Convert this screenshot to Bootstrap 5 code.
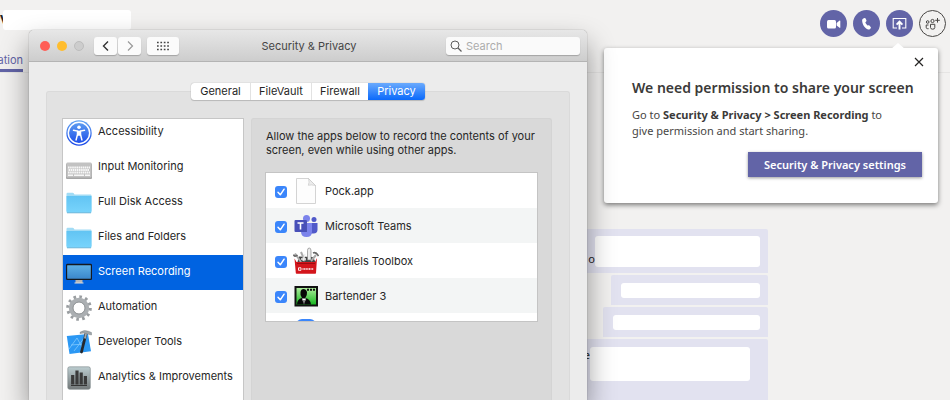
<!DOCTYPE html>
<html lang="en">
<head>
<meta charset="utf-8">
<meta name="viewport" content="width=device-width, initial-scale=1">
<title>Security &amp; Privacy</title>
<link rel="stylesheet" href="https://cdn.jsdelivr.net/npm/bootstrap@5.3.0/dist/css/bootstrap.min.css">
<style>
  body { background: #f2f1f0; font-family: "Noto Sans", "Open Sans", sans-serif; font-size: 11px; line-height: 16px; color: #252423; }
  .app-head { height: 73px; border-bottom: 1px solid #e6e5e4; padding: 10px 4px 0 0; }
  .calls { gap: 6px; }
  .blank { background: #fff; border-radius: 3px; }
  .who { width: 131px; height: 20px; margin-bottom: 21px; font-size: 16px; }
  .who .blank { width: 128px; height: 20px; }
  .who-name { width: 3px; overflow: hidden; font-weight: 600; }
  .app-tab { width: 23px; height: 21px; border-bottom: 3px solid #6264a7; color: #6264a7; text-decoration: none; font-size: 11px; font-family: Inter, sans-serif; overflow: hidden; line-height: 18px; }
  .round { width: 27px; height: 27px; border-radius: 50%; background: #6264a7; border: 0; padding: 0; color: #fff; }
  .round.line { background: transparent; border: 1px solid #484644; color: #484644; }
  .chat { padding: 156px 182px 0 0; gap: 2px; }
  .bubble { background: #e2e2f0; border-radius: 2px 2px 0 0; }
  .bubble.a { padding: 7px 8px 6px; height: 44px; }
  .bubble.b { padding: 8px 8px 7px 10px; height: 30px; }
  .bubble.c { padding: 8px 18px 20px; height: 69px; }
  .w-a { width: 165px; height: 31px; } .w-b { width: 139px; height: 15px; }
  .w-c { width: 147px; height: 15px; } .w-d { width: 160px; height: 34px; }

  .tip { top: 48px; right: 12px; width: 334px; height: 155px; background: #fff; border-radius: 3px; box-shadow: 0 2px 5px rgba(0,0,0,.5); padding: 6px 16px 0 28px; z-index: 1; }
  .tip::before { content: ""; position: absolute; top: -5px; right: 33px; border: 7px solid transparent; border-top: 0; border-bottom: 6px solid #fff; }
  .tip h1 { font-size: 14px; line-height: 20px; font-weight: 600; color: #3b3a39; margin: 8px 0 9px; white-space: nowrap; }
  .tip p { color: #484644; margin: 0 0 13px; }
  .tip b { font-weight: 700; color: #3b3a39; }
  .x-btn { background: none; border: 0; padding: 0; width: 16px; height: 16px; margin-right: -5px; }
  .go-btn { background: #6264a7; color: #fff; border: 0; width: 174px; height: 25px; font-weight: 600; box-shadow: 0 1px 3px rgba(0,0,0,.4); padding: 0; }

  .win { top: 30px; left: 29px; width: 558px; bottom: 0; border-radius: 5px 5px 0 0; background: #ececec; box-shadow: 0 0 1px rgba(0,0,0,.6), 0 14px 28px rgba(0,0,0,.42); font-family: Inter, sans-serif; font-size: 11px; line-height: 14px; z-index: 2; overflow: hidden; }
  .win-bar { height: 32px; background: linear-gradient(#e7e7e7, #cdcdcd); border-bottom: 1px solid #b4b4b4; padding: 0 7px 0 11px; flex: none; }
  .light { width: 10px; height: 10px; border-radius: 50%; border: 0; padding: 0; margin-right: 7px; }
  .light.red { background: #ff5f57; } .light.amber { background: #ffbd2e; } .light.off { background: #cdcdcd; border: 1px solid #bdbdbd; margin-right: 10px; }
  .pair { gap: 1px; }
  .tool { width: 23px; height: 18px; background: #fbfbfb; border: 0; border-radius: 3px; padding: 0; box-shadow: 0 1px 1px rgba(0,0,0,.22); }
  .tool.wide { width: 32px; margin-left: 6px; }
  .win-name { color: #454545; margin-right: 7px; }
  .find { width: 134px; height: 18px; background: #fafafa; border-radius: 3px; box-shadow: 0 1px 1px rgba(0,0,0,.22); padding-left: 4px; gap: 4px; }
  .find input { border: 0; outline: 0; background: none; padding: 0; width: 100%; font-size: 11px; }
  .find input::placeholder { color: #acacac; opacity: 1; }
  .win-body { padding: 21px 17px 0; min-height: 0; }
  .tabs { margin-bottom: -9px; z-index: 1; height: 17px; background: #fff; border-radius: 3px; box-shadow: 0 0 1px rgba(0,0,0,.4), 0 1px 1px rgba(0,0,0,.15); }
  .tabs button { background: none; border: 0; border-left: 1px solid #e2e2e2; padding: 0; width: 57px; color: #262626; line-height: 17px; }
  .tabs button:first-child { border-left: 0; width: 59px; }
  .tabs button:nth-child(2) { width: 61px; }
  .tabs button.on { background: linear-gradient(#6aaafd, #0a69fb); color: #fff; border-radius: 0 3px 3px 0; border-left: 0; }
  .group { background: #e2e2e2; border: 1px solid #dadada; border-bottom: 0; border-radius: 3px 3px 0 0; padding: 26px 17px 0 15px; gap: 7px; min-height: 0; }
  .side { width: 182px; background: #fff; border: 1px solid #c6c6c6; border-bottom: 0; overflow: hidden; flex: none; }
  .side ul { margin: -4px 0 0; }
  .side button { width: 100%; height: 35px; background: none; border: 0; padding: 0 0 3px 3px; gap: 6px; color: #262626; white-space: nowrap; }
  .side button.on { background: #0063e1; color: #fff; }
  .side svg { width: 26px; height: 26px; flex: none; margin-top: 3px; }
  .pane { background: #d9d9d9; border: 1px solid #d4d4d4; border-bottom: 0; border-radius: 3px 3px 0 0; padding: 10px 13px 0; color: #262626; }
  .pane p { margin: 0 0 15px 1px; }
  .apps { background: #fff; border: 1px solid #c4c4c4; height: 150px; overflow: hidden; }
  .apps li { height: 35px; padding: 0 0 0 9px; }
  .apps li:nth-child(even) { background: #f3f5f5; }
  .apps label { gap: 6px; height: 35px; }
  .apps svg { width: 26px; height: 28px; flex: none; }
  .apps input { appearance: none; width: 12px; height: 12px; margin: 2px 6px 0 0; border-radius: 3px; background: #3b86fb url("data:image/svg+xml,%3Csvg xmlns='http://www.w3.org/2000/svg' viewBox='0 0 12 12'%3E%3Cpath d='M3 6.3l2.3 2.5 3.8-5.6' fill='none' stroke='white' stroke-width='1.5' stroke-linecap='round' stroke-linejoin='round'/%3E%3C/svg%3E"); }
</style>
<script src="https://cdn.jsdelivr.net/npm/bootstrap@5.3.0/dist/js/bootstrap.bundle.min.js"></script>
</head>
<body>
<div class="position-relative overflow-hidden vh-100">
  <header class="app-head d-flex justify-content-between align-items-start">
    <div>
      <div class="who d-flex"><span class="who-name">v</span><div class="blank"></div></div>
      <a class="app-tab d-flex justify-content-end" href="#">ation</a>
    </div>
    <div class="calls d-flex">
      <button class="round d-flex align-items-center justify-content-center" aria-label="Video call"><svg width="15" height="12" viewBox="0 0 15 12"><rect x="1" y="2" width="9" height="8.500" rx="1.500" fill="currentColor"/><path d="M10.600 5l3-2.400q.7-.3.7.5v6.200q0 .8-.7.500l-3-2.300z" fill="currentColor"/></svg></button>
      <button class="round d-flex align-items-center justify-content-center" aria-label="Audio call"><svg width="14" height="14" viewBox="0 0 14 14"><path d="M3.300 1.500l1.300-.5q.7-.2 1 .5l.8 1.800q.3.600-.2 1.100l-.9.9q.3 1.500 2.200 3.300l1.100-.3q.7-.2 1.100.4l1.100 1.500q.4.600-.1 1.100l-.9.9q-.7.600-1.700.3C5 11.400 2.300 7.700 2.100 3.400q0-1.400 1.200-1.900z" fill="currentColor"/></svg></button>
      <button class="round d-flex align-items-center justify-content-center" aria-label="Share screen"><svg width="15" height="14" viewBox="0 0 15 14" fill="none" stroke="currentColor"><path d="M5 11H1.200V1.500h12.600V11H10" stroke-width="1.100"/><path d="M7.500 12.500V5M4.600 7.700l2.900-3 2.900 3" stroke-width="1.900"/></svg></button>
      <button class="round line d-flex align-items-center justify-content-center" aria-label="Add people"><svg width="15" height="14" viewBox="0 0 15 14" fill="none" stroke="currentColor"><circle cx="2.700" cy="5" r="1.300"/><circle cx="7.500" cy="4" r="1.600"/><path d="M3.500 8H1.200v2.300q0 1.400 1.400 1.400h1M5.500 7.300h4.300v3.200q0 1.700-2.100 1.700t-2.200-1.700zM12.500 1v4.600M10.200 3.300h4.600"/></svg></button>
    </div>
  </header>

  <main class="chat d-flex flex-column align-items-end">
    <div class="bubble a d-flex align-items-end"><span>o</span><div class="blank w-a"></div></div>
    <div class="bubble b"><div class="blank w-b"></div></div>
    <div class="bubble b"><div class="blank w-c"></div></div>
    <div class="bubble c d-flex"><span>e</span><div class="blank w-d"></div></div>
  </main>

  <section class="tip position-absolute" aria-label="Screen sharing permission">
    <div class="d-flex justify-content-end"><button class="x-btn" aria-label="Close"><svg class="d-block" width="16" height="16" viewBox="0 0 16 16"><path d="M4 4l8 8M12 4l-8 8" stroke="#252423" stroke-width="1.200"/></svg></button></div>
    <h1>We need permission to share your screen</h1>
    <p>Go to <b>Security &amp; Privacy &gt; Screen Recording</b> to<br>give permission and start sharing.</p>
    <div class="d-flex justify-content-end"><button class="go-btn">Security &amp; Privacy settings</button></div>
  </section>

  <section class="win position-absolute d-flex flex-column" aria-label="Security &amp; Privacy">
    <div class="win-bar d-flex align-items-center justify-content-between">
      <div class="d-flex align-items-center">
        <button class="light red" aria-label="Close window"></button>
        <button class="light amber" aria-label="Minimise"></button>
        <button class="light off" aria-label="Zoom" disabled></button>
        <div class="pair d-flex">
          <button class="tool" aria-label="Back"><svg class="d-block mx-auto" width="10" height="12" viewBox="0 0 10 12"><path d="M7 1.500L2.500 6 7 10.500" fill="none" stroke="#333" stroke-width="1.400"/></svg></button>
          <button class="tool" aria-label="Forward"><svg class="d-block mx-auto" width="10" height="12" viewBox="0 0 10 12"><path d="M3 1.500L7.500 6 3 10.500" fill="none" stroke="#999" stroke-width="1.200"/></svg></button>
        </div>
        <button class="tool wide" aria-label="Show all"><svg class="d-block mx-auto" width="14" height="10" viewBox="0 0 14 10" stroke="#444" stroke-width="1.700" stroke-dasharray="1.700 1.700"><path d="M1 1.500h12M1 5h12M1 8.500h12"/></svg></button>
      </div>
      <div class="win-name">Security &amp; Privacy</div>
      <label class="find d-flex align-items-center"><svg class="flex-shrink-0" width="12" height="12" viewBox="0 0 12 12" fill="none" stroke="#5c5c5c"><circle cx="5" cy="5" r="4"/><path d="M8 8l3.500 3.500" stroke-width="1.300"/></svg><input type="text" placeholder="Search" aria-label="Search"></label>
    </div>
    <div class="win-body flex-grow-1 d-flex flex-column">
      <div class="tabs d-flex align-self-center position-relative">
        <button>General</button><button>FileVault</button><button>Firewall</button><button class="on">Privacy</button>
      </div>
      <div class="group flex-grow-1 d-flex">
        <nav class="side" aria-label="Privacy categories">
          <ul class="list-unstyled">
            <li><button class="d-flex align-items-center"><svg viewBox="0 0 26 26"><defs><linearGradient id="ac" x2="0" y2="1"><stop stop-color="#63a5f2"/><stop offset="1" stop-color="#1746e8"/></linearGradient></defs><circle cx="13" cy="13" r="12.700" fill="url(#ac)"/><circle cx="13" cy="13" r="10.700" fill="none" stroke="#fff" stroke-width="1.500"/><circle cx="13" cy="7.300" r="1.800" fill="#fff"/><path d="M7.500 10.300l4 .8v3.300l-1.400 5.500M18.500 10.300l-4 .8v3.300l1.400 5.500" fill="none" stroke="#fff" stroke-width="1.500" stroke-linecap="round"/><path d="M11 10.800h4v5h-4z" fill="#fff"/></svg>Accessibility</button></li>
            <li><button class="d-flex align-items-center"><svg viewBox="0 0 26 26"><rect y="8.500" width="26" height="15.500" rx="1" fill="#a6a6a6"/><rect x=".5" y="7.500" width="25" height="15" rx="1" fill="#c2c2c2"/><g stroke="#f7f7f7" stroke-width="1.800" stroke-dasharray="1.600 .5"><path d="M2 12.500h22M2.500 15h21M2 17.500h22"/></g><path d="M2 20.200h5M8 20.200h10M19 20.200h5" stroke="#f7f7f7" stroke-width="1.600"/></svg>Input Monitoring</button></li>
            <li><button class="d-flex align-items-center"><svg viewBox="0 0 26 26"><defs><linearGradient id="fo" x2="0" y2="1"><stop stop-color="#62c4f3"/><stop offset="1" stop-color="#78d4fc"/></linearGradient></defs><path d="M.5 4q0-1.200 1.200-1.200h5q.8 0 1.200.7l.6 1h16q1 0 1 1V21H.5z" fill="#a2dcf5"/><path d="M.5 6h25v16q0 .8-.8.800H1.300q-.8 0-.8-.8z" fill="url(#fo)"/><path d="M1 22.800h24" stroke="#58a9d0" stroke-width=".8"/></svg>Full Disk Access</button></li>
            <li><button class="d-flex align-items-center"><svg viewBox="0 0 26 26"><path d="M.5 4q0-1.200 1.200-1.200h5q.8 0 1.200.7l.6 1h16q1 0 1 1V21H.5z" fill="#a2dcf5"/><path d="M.5 6h25v16q0 .8-.8.800H1.300q-.8 0-.8-.8z" fill="url(#fo)"/><path d="M1 22.800h24" stroke="#58a9d0" stroke-width=".8"/></svg>Files and Folders</button></li>
            <li><button class="on d-flex align-items-center"><svg viewBox="0 0 26 26"><defs><linearGradient id="mo" x2="0" y2="1"><stop stop-color="#5eb1e7"/><stop offset="1" stop-color="#3a86cb"/></linearGradient></defs><path d="M9.500 19h7v4h-7z" fill="#b5b7b9"/><rect x=".5" y="4.500" width="25" height="14.800" rx="1" fill="url(#mo)" stroke="#15191f" stroke-width="1.300"/><path d="M8.500 23h9" stroke="#ddd"/></svg>Screen Recording</button></li>
            <li><button class="d-flex align-items-center"><svg viewBox="0 0 26 26"><circle cx="13" cy="13" r="11.200" fill="none" stroke="#9a9ea1" stroke-width="3.200" stroke-dasharray="2.600 3.264"/><circle cx="13" cy="13" r="8" fill="none" stroke="#abafb2" stroke-width="4.400"/><circle cx="13" cy="13" r="6" fill="none" stroke="#85898c" stroke-width=".8"/></svg>Automation</button></li>
            <li><button class="d-flex align-items-center"><svg viewBox="0 0 26 26"><path d="M.8 6L22 4l3 17.300L3.500 24z" fill="#2b98f4"/><path d="M3 19l8-11 6 11M5 15l13-1M8 21L19 7" fill="none" stroke="#8dd0ff" stroke-width=".7"/><path d="M20 3.500L15.500 22" stroke="#24282d" stroke-width="2.800" stroke-linecap="round"/><path d="M20.200 2.500L19 8.500" stroke="#a3a8ac" stroke-width="2"/><path d="M14 2.300q4-3 8.500-1l3 1.200V5l-3-.7q-4-2-8.500-.8z" fill="#9fa6ab" stroke="#6d747a" stroke-width=".4"/></svg>Developer Tools</button></li>
            <li><button class="d-flex align-items-center"><svg viewBox="0 0 26 26"><defs><linearGradient id="an" x2="0" y2="1"><stop stop-color="#bccdd0"/><stop offset="1" stop-color="#737879"/></linearGradient></defs><rect x="1.800" y="1.800" width="22.500" height="22.500" rx="1.800" fill="url(#an)" stroke="#7b8486" stroke-width=".6"/><path d="M5 20.500h16" stroke="#353535"/><path d="M6.700 10v9.500M11 5.500v14M15.200 7.500v12M19.400 11v8.500" stroke="#3a3a3a" stroke-width="3.200"/></svg>Analytics &amp; Improvements</button></li>
          </ul>
        </nav>
        <div class="pane flex-grow-1">
          <p>Allow the apps below to record the contents of your<br>screen, even while using other apps.</p>
          <ul class="apps list-unstyled">
            <li><label class="d-flex align-items-center"><span class="d-flex align-items-center"><input type="checkbox" checked><svg viewBox="0 0 26 28"><path d="M3.500 1.500h12l7 7v18h-19z" fill="#fdfdfd" stroke="#c9c9c9" stroke-width=".8"/><path d="M15.500 1.500q1.200 4-.2 6.800 3.200-.8 7.200.2z" fill="#ececec" stroke="#c4c4c4" stroke-width=".6"/></svg></span>Pock.app</label></li>
            <li><label class="d-flex align-items-center"><span class="d-flex align-items-center"><input type="checkbox" checked><svg viewBox="0 0 26 28"><circle cx="21" cy="7.500" r="2.500" fill="#5059c9"/><path d="M17 11h7.500v6.500q0 4-4 4H17z" fill="#5059c9"/><circle cx="13.500" cy="6.500" r="3.500" fill="#7b83eb"/><path d="M8 11h11v8.500q0 5.500-5.500 5.500T8 19.500z" fill="#7b83eb"/><path d="M10 8.500h4V20h-5z" fill="#5158ad"/><rect x="1.500" y="8" width="12" height="12" rx="1" fill="#4850b8"/><path d="M4.500 11h6M7.500 11v6.500" stroke="#fff" stroke-width="1.600"/></svg></span>Microsoft Teams</label></li>
            <li><label class="d-flex align-items-center"><span class="d-flex align-items-center"><input type="checkbox" checked><svg viewBox="0 0 26 28"><path d="M4.500 15L6 9.500l14 .5 2.500 5z" fill="#454545"/><path d="M8 15L2 6.500M12 14L8 5M18 14l5-6" stroke="#aaa" stroke-width="2"/><path d="M14.500 13V3.500q0-2.500 1.700-2.500T18 3.500V13z" fill="#ececec" stroke="#777" stroke-width=".6"/><path d="M.5 7.500q1 3 4 .5M20 6q3-1.500 5.500 3" fill="none" stroke="#666" stroke-width="1.600"/><path d="M10 14l2-7M8 12h5" stroke="#eee" stroke-width="1.300"/><path d="M1.500 11.500l2 3.500h18.500l2-4-1 15q0 .8-.8.800H3.600q-.8 0-.8-.8z" fill="#d3151b"/><path d="M4 16.500h18" stroke="#9e0b10"/><path d="M5.500 20.800h2.500v2.500H5.500z" fill="none" stroke="#fff" stroke-width=".9"/><path d="M9.500 22h11" stroke="#fff" stroke-width="1.600" stroke-dasharray="1.100 .5"/></svg></span>Parallels Toolbox</label></li>
            <li><label class="d-flex align-items-center"><span class="d-flex align-items-center"><input type="checkbox" checked><svg viewBox="0 0 26 28"><defs><linearGradient id="ba" x2="0" y2="1"><stop stop-color="#b5f0a3"/><stop offset="1" stop-color="#10b51a"/></linearGradient></defs><rect x="2.500" y="5" width="21.500" height="18.500" fill="url(#ba)" stroke="#111" stroke-width="2"/><path d="M14 7.700h8" stroke="#111" stroke-width="2" stroke-dasharray="2 1"/><path d="M4 22.500q0-5.500 5-6.500-2.200-3.300-1.500-6Q8 7 10.500 7T14 10q.4 3-1.700 6 5.200 1 5.700 6.500z" fill="#080808"/><path d="M9 16.500l2 6 2-6z" fill="#fff"/><path d="M11 18v4" stroke="#111"/></svg></span>Bartender 3</label></li>
            <li><label class="d-flex align-items-start"><span class="d-flex"><input type="checkbox" class="invisible" aria-label="Next app"><svg viewBox="0 0 26 28"><rect x="3" y="6" width="20" height="20" rx="6" fill="#3b86fb"/></svg></span></label></li>
          </ul>
        </div>
      </div>
    </div>
  </section>
</div>
</body>
</html>
